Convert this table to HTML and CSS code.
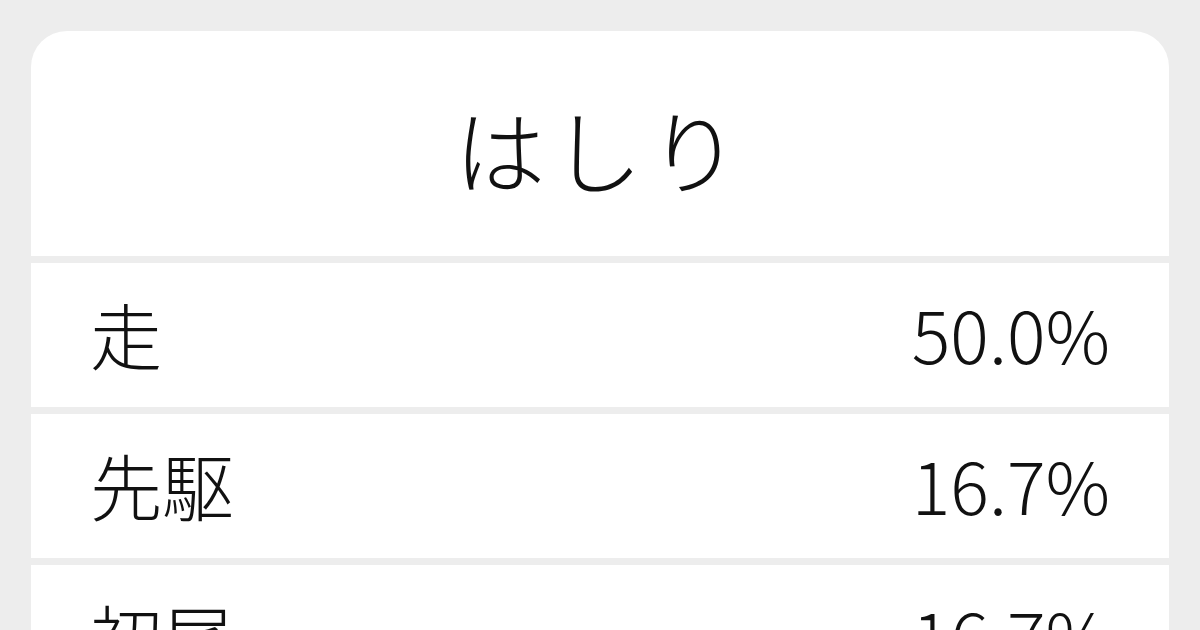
FILE: index.html
```html
<!DOCTYPE html>
<html lang="ja">
<head>
  <meta charset="utf-8">
  <title>はしり</title>
  <link rel="stylesheet" href="styles.css">
</head>
<body>
  <div class="card">
    <h1 class="word">はしり</h1>
    <ul class="list">
      <li class="row">
        <span class="kanji">走</span>
        <span class="rate">50.0%</span>
      </li>
      <li class="row">
        <span class="kanji">先駆</span>
        <span class="rate">16.7%</span>
      </li>
      <li class="row">
        <span class="kanji">初尾</span>
        <span class="rate">16.7%</span>
      </li>
    </ul>
  </div>
</body>
</html>
```

FILE: styles.css
```css
html,
body {
  margin: 0;
  height: 100%;
  overflow: hidden;
}

body {
  background: #ededed;
  color: #111;
  font-family: "Noto Sans CJK JP", "Noto Sans", sans-serif;
  font-weight: 300;
  padding: 31px 31px 0;
  box-sizing: border-box;
}

.card {
  border-radius: 36px 36px 0 0;
  overflow: hidden;
  display: flex;
  flex-direction: column;
  gap: 7px;
}

.word {
  margin: 0;
  background: #fff;
  height: 225px;
  display: flex;
  align-items: center;
  justify-content: center;
  font-size: 91px;
  font-weight: 300;
  letter-spacing: 6px;
  padding-top: 6px;
  box-sizing: border-box;
}

.list {
  list-style: none;
  margin: 0;
  padding: 0;
  display: flex;
  flex-direction: column;
  gap: 7px;
}

.row {
  background: #fff;
  height: 144px;
  padding: 0 59px 5px;
  box-sizing: border-box;
  display: flex;
  align-items: center;
  justify-content: space-between;
  font-size: 72px;
}
```
